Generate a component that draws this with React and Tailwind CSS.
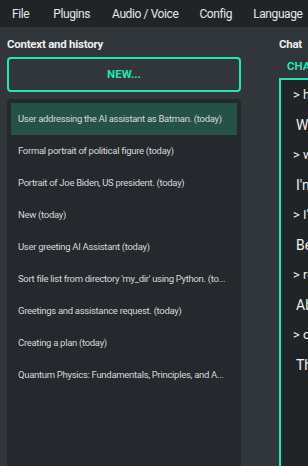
import React from 'react';

const history = [
  'User addressing the AI assistant as Batman. (today)',
  'Formal portrait of political figure (today)',
  'Portrait of Joe Biden, US president. (today)',
  'New (today)',
  'User greeting AI Assistant (today)',
  "Sort file list from directory 'my_dir' using Python. (to...",
  'Greetings and assistance request. (today)',
  'Creating a plan (today)',
  'Quantum Physics: Fundamentals, Principles, and A...',
];

const chat = [
  { user: true, text: '> hello, Batman' },
  { user: false, text: 'What brings you to Gotham tonight?' },
  { user: true, text: '> who are you?' },
  { user: false, text: "I'm Batman, the protector of Gotham." },
  { user: true, text: "> I'm in trouble" },
  { user: false, text: 'Be calm. Tell me what happened.' },
  { user: true, text: '> really?' },
  { user: false, text: 'Absolutely. Justice never sleeps.' },
  { user: true, text: '> ok, thanks' },
  { user: false, text: 'The night is always darkest before dawn.' },
];

const App = () => {
  return (
    <div
      className="w-[308px] h-[466px] overflow-hidden bg-[#31363a] text-[#e4e6e8] flex flex-col"
      style={{ fontFamily: 'Roboto, "Noto Sans", sans-serif' }}
    >
      <div className="h-[27px] shrink-0 bg-[#212427] flex items-center text-[12px] tracking-[-0.4px] text-[#e6e8ea] whitespace-nowrap">
        <span className="ml-[12px]">File</span>
        <span className="ml-[24px]">Plugins</span>
        <span className="ml-[22px]">Audio / Voice</span>
        <span className="ml-[21px]">Config</span>
        <span className="ml-[21px]">Language</span>
      </div>

      <div className="flex-1 flex min-h-0 pl-[7px]">
        <div className="w-[234px] shrink-0 flex flex-col">
          <div className="h-[29px] flex items-end pb-[3px] text-[11.5px] tracking-[-0.25px] font-bold text-[#eceef0]">
            Context and history
          </div>
          <button className="mt-[1px] h-[35px] rounded-[4px] border-2 border-[#1de9b6] text-[#1de9b6] text-[11.5px] font-bold">
            NEW...
          </button>
          <div className="mt-[7px] flex-1 bg-[#25282c] rounded-t-[4px] pt-[4px] px-[4px]">
            {history.map((h, i) => (
              <div
                key={i}
                className={`h-[32px] flex items-center px-[7px] text-[9.5px] tracking-[-0.3px] text-[#d6d8da] whitespace-nowrap overflow-hidden ${
                  i === 0 ? 'bg-[#255247]' : ''
                }`}
              >
                {h}
              </div>
            ))}
          </div>
        </div>

        <div className="ml-[38px] flex-1 min-w-0 flex flex-col overflow-hidden">
          <div className="h-[29px] flex items-end pb-[3px] text-[11.5px] tracking-[-0.25px] font-bold text-[#eceef0] whitespace-nowrap">
            Chat
          </div>
          <div className="h-[22px] flex items-center pl-[8px] text-[11.5px] font-bold text-[#1de9b6] whitespace-nowrap">
            CHAT
          </div>
          <div className="flex-1 bg-[#212427] border-t-2 border-l-2 border-[#1de9b6] whitespace-nowrap text-[14px] text-[#eef0f2]">
            {chat.map((c, i) => (
              <div
                key={i}
                className={`h-[30px] flex items-center ${c.user ? 'pl-[12px] text-[13px]' : 'pl-[15px]'}`}
              >
                {c.text}
              </div>
            ))}
          </div>
        </div>
      </div>
    </div>
  );
};

export default App;
